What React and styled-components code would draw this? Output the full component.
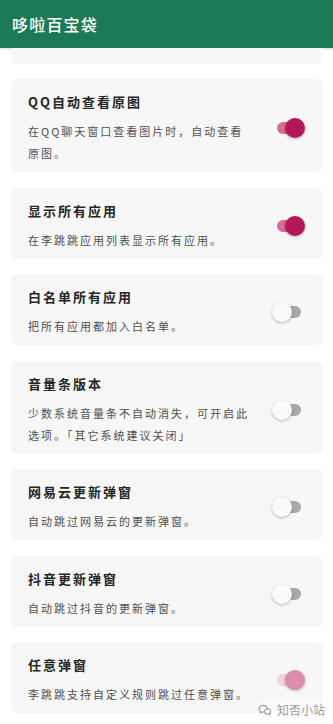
import React from "react";
import styled, { createGlobalStyle } from "styled-components";
import { RiWechatLine } from "react-icons/ri";

const GlobalStyle = createGlobalStyle`
  html, body {
    margin: 0;
    padding: 0;
    background: #ffffff;
    font-family: "Noto Sans CJK SC", "Noto Sans", sans-serif;
  }
`;

const Screen = styled.div`
  position: relative;
  width: 333px;
  height: 724px;
  overflow: hidden;
  background: #ffffff;
`;

const Header = styled.header`
  height: 48px;
  display: flex;
  align-items: center;
  padding: 0 12px;
  background: #1b7a54;
  box-shadow: 0 1px 2px rgba(27, 122, 84, 0.25);
`;

const HeaderTitle = styled.h1`
  margin: 0;
  font-size: 16px;
  font-weight: 500;
  letter-spacing: 1.2px;
  color: #ffffff;
`;

const List = styled.div`
  display: flex;
  flex-direction: column;
  gap: 15.5px;
  padding: 0 10px 0 11px;
`;

const PeekCard = styled.div`
  height: 15.5px;
  background: #f7f7f7;
  border-radius: 0 0 6px 6px;
`;

const Card = styled.div`
  display: flex;
  align-items: center;
  padding: 13px 17px 8px 17px;
  background: #f7f7f7;
  border-radius: 6px;
`;

const TextBlock = styled.div`
  flex: 1;
  display: flex;
  flex-direction: column;
  gap: 8px;
`;

const Title = styled.div`
  font-size: 13px;
  line-height: 20px;
  font-weight: 700;
  letter-spacing: 2px;
  color: #262626;
`;

const Desc = styled.div`
  max-width: 224px;
  font-size: 11px;
  line-height: 22px;
  letter-spacing: 2px;
  color: #4f4f4f;
`;

const Switch = styled.div`
  position: relative;
  width: 24px;
  height: 12px;
  margin-right: 5px;
  border-radius: 6px;
  flex-shrink: 0;
  background: ${(p) =>
    p.$faded ? "#f3d2de" : p.$on ? "#d96b97" : "#a9a9a9"};
`;

const Thumb = styled.span`
  position: absolute;
  top: -4px;
  left: ${(p) => (p.$on ? "8px" : "-5px")};
  width: 20px;
  height: 20px;
  border-radius: 50%;
  background: ${(p) =>
    p.$faded ? "#dd8cad" : p.$on ? "#b3185a" : "#fafafa"};
  box-shadow: 0 1px 3px rgba(0, 0, 0, 0.28);
`;

const Watermark = styled.div`
  position: absolute;
  right: 8px;
  bottom: 6px;
  display: flex;
  align-items: center;
  gap: 5px;
  font-size: 12px;
  color: #9a9a9a;
  background: rgba(255, 255, 255, 0.6);
`;

const items = [
  {
    title: "QQ自动查看原图",
    desc: "在QQ聊天窗口查看图片时，自动查看原图。",
    on: true,
  },
  { title: "显示所有应用", desc: "在李跳跳应用列表显示所有应用。", on: true },
  { title: "白名单所有应用", desc: "把所有应用都加入白名单。", on: false },
  {
    title: "音量条版本",
    desc: "少数系统音量条不自动消失，可开启此选项。「其它系统建议关闭」",
    on: false,
  },
  { title: "网易云更新弹窗", desc: "自动跳过网易云的更新弹窗。", on: false },
  { title: "抖音更新弹窗", desc: "自动跳过抖音的更新弹窗。", on: false },
  {
    title: "任意弹窗",
    desc: "李跳跳支持自定义规则跳过任意弹窗。",
    on: true,
    faded: true,
  },
];

const App = () => {
  return (
    <Screen>
      <GlobalStyle />
      <Header>
        <HeaderTitle>哆啦百宝袋</HeaderTitle>
      </Header>
      <List>
        <PeekCard />
        {items.map((item) => (
          <Card key={item.title}>
            <TextBlock>
              <Title>{item.title}</Title>
              <Desc>{item.desc}</Desc>
            </TextBlock>
            <Switch $on={item.on} $faded={item.faded}>
              <Thumb $on={item.on} $faded={item.faded} />
            </Switch>
          </Card>
        ))}
      </List>
      <Watermark>
        <RiWechatLine size={14} />
        知否小站
      </Watermark>
    </Screen>
  );
};

export default App;
